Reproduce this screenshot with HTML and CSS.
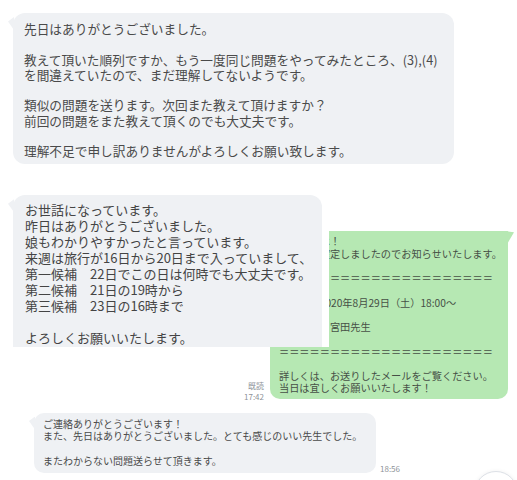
FILE: index.html
```html
<!DOCTYPE html>
<html lang="ja">
<head>
  <meta charset="UTF-8" />
  <meta name="viewport" content="width=device-width, initial-scale=1.0"/>
  <title>トーク</title>
  <link rel="stylesheet" href="styles.css">
</head>
<body>
  <main class="chat">
    <div class="row">
      <div class="bubble gray first">
        先日はありがとうございました。<br>
        <br>
        教えて頂いた順列ですか、もう一度同じ問題をやってみたところ、(3),(4)<br>
        を間違えていたので、まだ理解してないようです。<br>
        <br>
        類似の問題を送ります。次回また教えて頂けますか？<br>
        前回の問題をまた教えて頂くのでも大丈夫です。<br>
        <br>
        理解不足で申し訳ありませんがよろしくお願い致します。
      </div>
    </div>

    <div class="stack">
      <div class="cover">
        <div class="bubble gray cut">
          お世話になっています。<br>
          昨日はありがとうございました。<br>
          娘もわかりやすかったと言っています。<br>
          来週は旅行が16日から20日まで入っていまして、<br>
          第一候補　22日でこの日は何時でも大丈夫です。<br>
          第二候補　21日の19時から<br>
          第三候補　23日の16時まで<br>
          <br>
          よろしくお願いいたします。
        </div>
      </div>

      <div class="row mine">
        <div class="meta">既読<br>17:42</div>
        <div class="bubble green">
          こんにちは！<br>
          体験日が確定しましたのでお知らせいたします。<br>
          <br>
          ＝＝＝＝＝＝＝＝＝＝＝＝＝＝＝＝＝＝＝＝＝<br>
          <br>
          日　時：2020年8月29日（土）18:00～<br>
          <br>
          担当講師：宮田先生<br>
          <br>
          ＝＝＝＝＝＝＝＝＝＝＝＝＝＝＝＝＝＝＝＝＝<br>
          <br>
          詳しくは、お送りしたメールをご覧ください。<br>
          当日は宜しくお願いいたします！
        </div>
      </div>
    </div>

    <div class="row reply">
      <div class="bubble gray small">
        ご連絡ありがとうございます！<br>
        また、先日はありがとうございました。とても感じのいい先生でした。<br>
        <br>
        またわからない問題送らせて頂きます。
      </div>
      <div class="meta">18:56</div>
    </div>

    <button class="scroll-btn" aria-label="scroll down"></button>
  </main>
</body>
</html>
```

FILE: styles.css
```css
body {
  margin: 0;
  background: #fff;
  font-family: "Noto Sans CJK JP", "Noto Sans", sans-serif;
  color: #4a4a4a;
}

.chat {
  position: relative;
  box-sizing: border-box;
  height: 480px;
  overflow: hidden;
  padding: 13px 9px 0 13px;
}

.row {
  display: flex;
  align-items: flex-end;
}

.bubble {
  position: relative;
  box-sizing: border-box;
  white-space: nowrap;
}

.bubble.gray {
  background: #eff1f4;
}

/* tail on the top-left of incoming messages */
.bubble.gray::before {
  content: "";
  position: absolute;
  left: -5px;
  top: 4px;
  width: 6px;
  height: 13px;
  background: inherit;
  clip-path: polygon(100% 0, 0 35%, 100% 100%);
}

.first {
  width: 441px;
  padding: 8px 0 6px 11px;
  font-size: 12.7px;
  line-height: 15.25px;
  border-radius: 12px;
}

.stack {
  display: grid;
  margin-top: 31px;
}

.stack > * {
  grid-area: 1 / 1;
}

.cover {
  z-index: 1;
  align-self: start;
  justify-self: start;
  background: #fff;
  padding-right: 7px;
}

.cut {
  width: 309px;
  padding: 7px 0 1px 12px;
  font-size: 13px;
  line-height: 16px;
  color: #444;
  border-radius: 12px 12px 0 0;
}

.mine {
  justify-content: flex-end;
  gap: 6px;
  padding-top: 36px;
}

.green {
  width: 238px;
  padding: 4px 0 4px 9px;
  background: #b6e8b3;
  font-size: 10.2px;
  line-height: 12.25px;
  color: #465046;
  border-radius: 10px 0 10px 10px;
}

.green::after {
  content: "";
  position: absolute;
  right: -6px;
  top: 0;
  width: 7px;
  height: 13px;
  background: inherit;
  clip-path: polygon(0 0, 100% 8%, 0 100%);
}

.meta {
  font-size: 8px;
  line-height: 11px;
  color: #8e9399;
  text-align: right;
  margin-bottom: -3px;
}

.reply {
  margin-top: 14px;
  padding-left: 21px;
  gap: 4px;
}

.small {
  width: 342px;
  padding: 5px 0 5px 9px;
  font-size: 10px;
  line-height: 12.5px;
  border-radius: 10px;
}

.small::before {
  top: 5px;
  height: 10px;
}

.reply .meta {
  margin-bottom: -1px;
}

.scroll-btn {
  position: absolute;
  left: 474px;
  top: 471px;
  width: 44px;
  height: 44px;
  padding: 0;
  border: 1px solid #dde1e7;
  border-radius: 50%;
  background: #fff;
  box-shadow: 0 0 4px rgba(0, 0, 0, 0.06);
}
```
